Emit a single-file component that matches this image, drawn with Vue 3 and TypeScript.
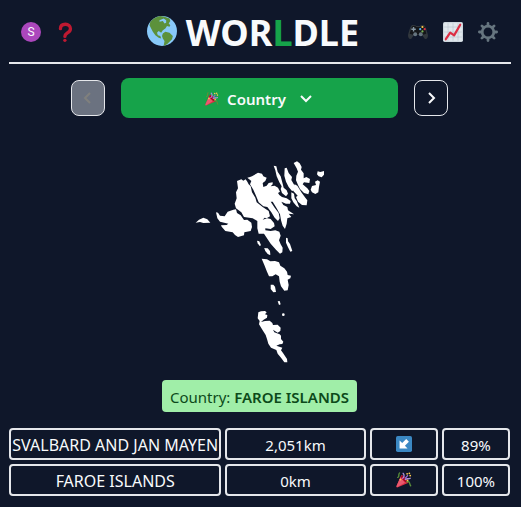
<script setup lang="ts">
interface Guess {
  name: string
  distance: string
  icon: 'arrow' | 'party'
  proximity: string
}

const guesses: Guess[] = [
  { name: 'SVALBARD AND JAN MAYEN', distance: '2,051km', icon: 'arrow', proximity: '89%' },
  { name: 'FAROE ISLANDS', distance: '0km', icon: 'party', proximity: '100%' },
]
</script>

<template>
  <div class="page">
    <svg class="defs" aria-hidden="true">
      <symbol id="party" viewBox="0 0 36 36">
        <path fill="#dd2e44" d="M11.6 7.6 1.1 31.3c-.5 1.4.2 3.2 1.7 3.3L27 24.5c2-1-1-6.800-5-11S13 5.600 11.600 7.600Z" />
        <path fill="#ea596e" d="M10 12 1 32l1 2.500L20 24Z" />
        <ellipse cx="19" cy="16" rx="3.500" ry="10" transform="rotate(-45 19 16)" fill="#a0041e" />
        <path fill="none" stroke="#aa8dd8" stroke-width="3" stroke-linecap="round" d="M15 14c4-2 4-8 1-11M21 17c4-4 6 0 11-3" />
        <path fill="none" stroke="#5c913b" stroke-width="3" stroke-linecap="round" d="M4 12c5-1 0-6 4-10M24 22c8-3 6 6 9 9" />
        <path fill="none" stroke="#9266cc" stroke-width="3" stroke-linecap="round" d="m21 14 5-6" />
        <g fill="#ffcc4d">
          <circle cx="25" cy="4" r="2" />
          <circle cx="32" cy="8" r="2" />
          <circle cx="26" cy="19" r="2" />
          <circle cx="10" cy="17" r="2" />
          <circle cx="30" cy="3" r="2" />
        </g>
      </symbol>
      <symbol id="arrow" viewBox="0 0 36 36">
        <rect width="36" height="36" rx="4" fill="#3b88c3" />
        <path fill="#fff" d="M8 10v18h18l-6-6 9-9-6-6-9 9Z" />
      </symbol>
    </svg>

    <header class="header">
      <div class="side left">
        <button class="icon avatar" type="button" aria-label="Account">S</button>
        <button class="icon" type="button" aria-label="Help">
          <svg viewBox="0 0 36 36">
            <path fill="none" stroke="#be1931" stroke-width="6" stroke-linecap="round" d="M8 12c0-6 4-8 9-8s9 3 9 8-3 6-6 8-4 3-4 6" />
            <circle cx="16" cy="33" r="3" fill="#be1931" />
          </svg>
        </button>
      </div>
      <h1 class="title">
        <svg class="globe" viewBox="0 0 36 36" aria-hidden="true">
          <circle cx="18" cy="18" r="18" fill="#88c9f9" />
          <path fill="#5c913b" d="M4 7C7 3 11 1 16 0l5 1 6 2 1 3-2 3 2 2-1 2-3-1-2 3-3 2-2 3-3-2-2 2 1 3 3 1 1 3-3-1-4-3-3-4-2-4-2-4Z" />
          <path fill="#88c9f9" d="m15 5 5-2 3 2 0 3-2 1-2-3-4 1Z" />
          <path fill="#5c913b" d="m19 21 3-2 5 1 4 4-1 4-3 3-3 3-4 2 1-6-2-3-1-3Z" />
        </svg>
        <span class="word">WOR<span class="green">L</span>DLE</span>
      </h1>
      <div class="side right">
        <button class="icon" type="button" aria-label="Games">
          <svg viewBox="0 0 36 36">
            <path fill="#31373d" d="M7 6c3-1 6-1 8 1h6c2-2 5-2 8-1 3 2 5 10 7 18 0 5-3 8-6 6l-5-7H11l-5 7c-3 2-6-1-6-6C2 16 4 8 7 6Z" />
            <path fill="#141619" d="M7 8c4-3 8 0 8 1h6c1-1 6-4 9 0l3 12-6 2H9l-6-2Z" />
            <path stroke="#8899a6" stroke-width="2.500" d="M10 9v8m-4-4h8" />
            <circle cx="13" cy="22" r="3.500" fill="#66757f" />
            <circle cx="23" cy="22" r="3.500" fill="#66757f" />
            <circle cx="26" cy="9" r="2" fill="#ffcc4d" />
            <circle cx="30" cy="13" r="2" fill="#dd2e44" />
            <circle cx="22" cy="13" r="2" fill="#55acee" />
            <circle cx="26" cy="17" r="2" fill="#77b255" />
          </svg>
        </button>
        <button class="icon" type="button" aria-label="Statistics">
          <svg viewBox="0 0 36 36">
            <rect width="36" height="36" rx="3" fill="#ccd6dd" />
            <rect x="2" y="2" width="32" height="32" fill="#e1e8ed" />
            <path stroke="#b5c2cb" d="M9 2v32M18 2v32M27 2v32M2 9h32M2 18h32M2 27h32" />
            <path fill="none" stroke="#dd2e44" stroke-width="4" stroke-linecap="round" stroke-linejoin="round" d="m5 31 8-12 7 5L31 5" />
          </svg>
        </button>
        <button class="icon" type="button" aria-label="Settings">
          <svg viewBox="0 0 36 36">
            <g stroke="#66757f" stroke-width="5" stroke-linecap="round">
              <path d="M18 2.500V7M18 29v4.500M2.500 18H7M29 18h4.500M7 7l3 3M26 26l3 3M29 7l-3 3M10 26l-3 3" />
            </g>
            <circle cx="18" cy="18" r="10.500" fill="none" stroke="#66757f" stroke-width="5" />
          </svg>
        </button>
      </div>
    </header>

    <nav class="rounds">
      <button class="step" type="button" aria-label="Previous round" disabled>
        <svg viewBox="0 0 16 16"><path d="m10 3-5 5 5 5" /></svg>
      </button>
      <button class="current" type="button">
        <svg class="party" aria-hidden="true"><use href="#party" /></svg>
        <span>Country</span>
        <svg class="chevron" viewBox="0 0 16 16" aria-hidden="true"><path d="m3 5 5 5 5-5" /></svg>
      </button>
      <button class="step" type="button" aria-label="Next round">
        <svg viewBox="0 0 16 16"><path d="m6 3 5 5-5 5" /></svg>
      </button>
    </nav>

    <main class="game">
      <svg class="map" viewBox="0 0 420 645" role="img" aria-label="Country outline">
        <path d="M17 203 27 194 40 188 52 193 61 203 40 204 30 201Z" />
        <path d="M78 172 84 173 90 182 104 184 113 170 130 164 138 163 141 174 152 181 162 195 172 194 184 203 186 216 182 228 163 232 162 241 144 246 135 240 128 232 106 228 95 215 93 211 110 210 115 206 90 200 82 190Z" />
        <g transform="translate(120 0)">
          <path d="M21 78 34 73 40 77 47 73 52 80 56 88 62 94 66 112 76 128 80 142 98 156 116 168 120 184 110 190 104 188 98 194 112 190 122 192 132 204 134 214 122 222 106 220 106 226 122 228 136 226 148 230 152 242 147 256 152 268 158 278 157 292 150 296 138 284 122 266 110 248 102 236 86 236 82 220 82 198 68 190 42 186 34 172 18 160 14 146 20 130 18 112 24 100Z" />
          <path d="M52 68 60 66 66 64 84 53 96 56 100 64 110 68 106 78 98 84 100 96 110 92 116 84 128 82 128 88 122 94 134 92 144 98 150 110 144 114 148 120 156 126 170 130 182 138 180 146 168 146 154 140 160 150 172 156 174 166 192 178 176 176 184 186 172 190 170 206 165 222 158 212 153 196 150 178 140 160 128 140 122 140 134 158 146 174 149 190 144 198 134 188 124 172 112 156 100 154 86 142 78 122 70 104 60 88 64 78Z" />
          <path d="M131 32 139 34 143 50 152 64 158 86 161 98 170 106 174 116 168 124 156 114 152 102 155 94 148 82 140 64 136 46Z" />
          <path d="M164 40 170 38 176 54 186 66 184 75 194 92 194 106 186 108 176 96 168 80 163 62Z" />
          <path d="M191 24 201 19 209 25 215 36 213 44 221 55 221 70 229 66 240 72 238 84 222 82 218 88 232 100 238 108 235 118 222 114 210 102 204 90 198 76 199 62 204 50 200 40Z" />
          <path d="M194 88 202 92 214 112 226 128 232 136 230 151 216 150 204 140 198 126 203 122 190 108 190 96Z" />
          <path d="M184 112 192 116 194 130 200 138 208 158 200 154 190 142 184 130Z" />
          <path d="M263 49 271 51 282 48 282 59 275 67 266 64 261 58Z" />
          <path d="M255 80 263 76 270 80 267 95 265 112 256 117 246 112 242 104 246 93 258 90Z" />
          <path d="M81 257 88 259 93 271 89 273 83 265Z" />
          <path d="M103 280 111 282 117 290 120 300 114 297 107 289Z" />
          <path d="M168 248 173 250 174 259 180 267 187 288 181 290 174 277 168 263Z" />
        </g>
        <g transform="translate(165 240)">
          <path d="M58 40 68 40 75 48 76 60 68 56 61 47Z" />
          <path d="M50 71 66 73 76 79 90 78 102 82 106 92 118 100 126 110 128 120 138 122 136 130 128 134 131 150 128 166 118 167 108 154 104 140 102 124 92 118 82 124 72 124 66 110 58 90Z" />
          <path d="M77 149 85 149 90 155 93 171 85 172 77 162Z" />
          <path d="M98 199 104 198 107 208 102 210Z" />
          <circle cx="115" cy="239" r="4" />
          <path d="M40 232 48 229 60 228 65 232 60 238 67 240 66 248 56 254 48 261 60 258 74 257 82 264 84 270 98 269 107 278 106 288 98 293 84 284 88 292 104 298 108 302 108 312 115 320 112 327 104 328 94 332 112 338 108 346 114 354 126 372 127 382 118 382 108 368 98 356 94 345 78 338 70 326 66 312 62 300 52 284 42 268 44 258 38 250Z" />
        </g>
      </svg>

      <p class="answer">Country: <strong>FAROE ISLANDS</strong></p>

      <ol class="guesses" aria-label="Guesses">
        <li v-for="guess in guesses" :key="guess.name" class="guess">
          <span class="cell name">{{ guess.name }}</span>
          <span class="cell distance">{{ guess.distance }}</span>
          <span class="cell mark">
            <svg aria-hidden="true"><use :href="'#' + guess.icon" /></svg>
          </span>
          <span class="cell">{{ guess.proximity }}</span>
        </li>
      </ol>
    </main>
  </div>
</template>

<style>
body {
  background: #0f172a;
}
</style>

<style scoped>
.page {
  padding: 0 10px 10px 9px;
  color: #f8fafc;
  font: 15px/24px 'Noto Sans', sans-serif;
}
.defs {
  position: absolute;
  width: 0;
  height: 0;
}
svg {
  display: block;
}
button {
  padding: 0;
  border: 0;
  background: none;
  color: inherit;
  font: inherit;
  cursor: pointer;
}
.header {
  display: grid;
  grid-template-columns: 1fr auto 1fr;
  align-items: center;
  height: 62px;
  border-bottom: 2px solid #e5e7eb;
}
.side {
  display: flex;
  gap: 15px;
  padding-top: 1px;
}
.left {
  padding-left: 12px;
}
.right {
  justify-content: flex-end;
  padding-right: 13px;
}
.icon,
.icon svg {
  width: 20px;
  height: 20px;
}
.avatar {
  border-radius: 50%;
  background: #ab47bc;
  font: 12px/20px Roboto, sans-serif;
}
.title {
  display: flex;
  align-items: center;
  gap: 9px;
  margin: 0;
  padding-right: 14px;
  font-size: 36px;
  line-height: 40px;
  font-weight: 700;
}
.word {
  padding-top: 4px;
}
.globe {
  width: 30px;
  height: 30px;
}
.green {
  color: #16a34a;
}
.rounds {
  display: flex;
  align-items: center;
  justify-content: center;
  gap: 16px;
  padding: 14px 63px 0 62px;
}
.step {
  display: grid;
  place-items: center;
  flex: none;
  box-sizing: border-box;
  width: 34px;
  height: 36px;
  border: 1px solid #e5e7eb;
  border-radius: 8px;
}
.step svg,
.chevron {
  width: 16px;
  height: 16px;
  fill: none;
  stroke: currentColor;
  stroke-width: 2;
}
.step:disabled {
  background: #6b7280;
  color: #80807d;
}
.current {
  display: flex;
  align-items: center;
  justify-content: center;
  flex: 1;
  height: 40px;
  padding-top: 2px;
  border-radius: 8px;
  background: #16a34a;
  font-weight: 600;
}
.party {
  width: 14px;
  height: 14px;
  margin-right: 8px;
}
.chevron {
  margin-left: 12px;
}
.game {
  padding-right: 1px;
}
.map {
  width: 140px;
  margin: 37px auto 10px;
  fill: #fff;
}
.answer {
  width: fit-content;
  margin: 0 auto 16px;
  padding: 5px 8px 3px;
  border-radius: 4px;
  background: #a0eea8;
  color: #0c4a1a;
}
.answer strong {
  font-weight: 600;
}
.guesses {
  display: grid;
  gap: 4px;
  margin: 0;
  padding: 0;
  list-style: none;
}
.guess {
  display: grid;
  grid-template-columns: repeat(7, 1fr);
  gap: 4px;
}
.cell {
  display: flex;
  align-items: center;
  justify-content: center;
  box-sizing: border-box;
  height: 32px;
  padding-top: 2px;
  border: 2px solid #e5e7eb;
  border-radius: 4px;
  white-space: nowrap;
}
.name {
  grid-column: span 3;
  font-size: 16px;
}
.distance {
  grid-column: span 2;
}
.mark {
  padding-top: 0;
}
.mark svg {
  width: 16px;
  height: 16px;
}
</style>
